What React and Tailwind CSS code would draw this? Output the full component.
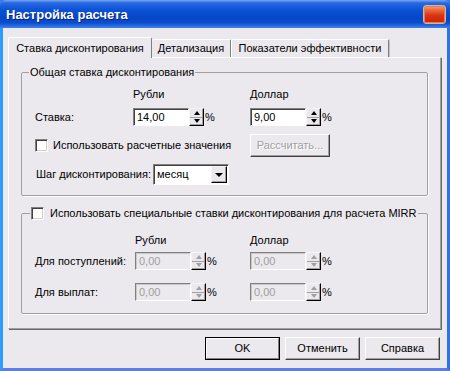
import React from 'react';

function CloseButton() {
  return (
    <div className="w-[23px] h-[19px] mr-[4px] rounded-[3px] border border-[#d9b49c] bg-[linear-gradient(180deg,#f2a474_0%,#e8683c_25%,#dc3412_55%,#cc2402_100%)] shadow-[inset_0_0_0_1px_#e87a58]" />
  );
}

function Checkbox() {
  return (
    <span className="block w-[13px] h-[13px] shrink-0 bg-white border border-t-[#808080] border-l-[#808080] border-r-white border-b-white shadow-[inset_1px_1px_0_#404040,inset_-1px_-1px_0_#d4d0c8]" />
  );
}

function Spinner({ disabled }) {
  return (
    <div className="flex flex-col w-[15px] h-[18px] border border-t-[#f4f4f4] border-l-[#f4f4f4] border-r-black border-b-black bg-[#ebe9ed] shadow-[inset_-1px_-1px_0_#a0a0a0]">
      <div className="flex-1 flex items-center justify-center border-b border-[#a0a0a0]">
        <span className={disabled ? 'w-0 h-0 border-x-[3px] border-x-transparent border-b-[4px] border-b-[#a0a0a0]' : 'w-0 h-0 border-x-[3px] border-x-transparent border-b-[4px] border-b-black'} />
      </div>
      <div className="flex-1 flex items-center justify-center">
        <span className={disabled ? 'w-0 h-0 border-x-[3px] border-x-transparent border-t-[4px] border-t-[#a0a0a0]' : 'w-0 h-0 border-x-[3px] border-x-transparent border-t-[4px] border-t-black'} />
      </div>
    </div>
  );
}

function NumField({ value, disabled }) {
  return (
    <div className="flex items-center">
      <div className={disabled
        ? 'w-[56px] h-[18px] flex items-center pl-[3px] bg-[#ebe9ed] text-[#a0a0a0] border border-t-[#808080] border-l-[#808080] border-r-white border-b-white shadow-[inset_1px_1px_0_#c8c8c8]'
        : 'w-[56px] h-[18px] flex items-center pl-[3px] bg-white border border-t-[#808080] border-l-[#808080] border-r-white border-b-white shadow-[inset_1px_1px_0_#404040]'}>
        {value}
      </div>
      <Spinner disabled={disabled} />
      <span className="ml-[1px]">%</span>
    </div>
  );
}

function Btn({ children, isDefault, disabled, w = 'w-[75px]' }) {
  if (isDefault) {
    return (
      <div className={`${w} h-[23px] border border-black`}>
        <div className="w-full h-full flex items-center justify-center border border-t-white border-l-white border-r-[#808080] border-b-[#808080]">
          {children}
        </div>
      </div>
    );
  }
  return (
    <div className={disabled
      ? `${w} h-[23px] flex items-center justify-center text-[#a0a0a0] [text-shadow:1px_1px_0_#fff] border border-t-white border-l-white border-r-[#404040] border-b-[#404040] shadow-[inset_-1px_-1px_0_#a0a0a0]`
      : `${w} h-[23px] flex items-center justify-center border border-t-white border-l-white border-r-[#404040] border-b-[#404040] shadow-[inset_-1px_-1px_0_#a0a0a0]`}>
      {children}
    </div>
  );
}

function Combo() {
  return (
    <div className="w-[76px] h-[21px] flex items-center bg-white border border-t-[#808080] border-l-[#808080] border-r-white border-b-white shadow-[inset_1px_1px_0_#404040]">
      <span className="flex-1 pl-[3px]">месяц</span>
      <div className="w-[16px] h-[17px] mr-[1px] flex items-center justify-center bg-[#ebe9ed] border border-t-[#f4f4f4] border-l-[#f4f4f4] border-r-black border-b-black shadow-[inset_-1px_-1px_0_#a0a0a0]">
        <span className="w-0 h-0 border-x-[4px] border-x-transparent border-t-[4px] border-t-black" />
      </div>
    </div>
  );
}

export default function App() {
  return (
    <div className="w-[450px] h-[371px] flex flex-col bg-[#3a7ce8] font-['Liberation_Sans',Arial,sans-serif] text-[11px] leading-[13px] text-black overflow-hidden">
      {/* title bar */}
      <div className="h-[28px] shrink-0 flex items-center justify-between pl-[6px] pt-[1px] rounded-t-[6px] bg-[linear-gradient(180deg,#7aa8f2_0%,#2a6ae2_10%,#0b52d6_35%,#0646c6_65%,#0a4ed0_82%,#3f82ea_100%)]">
        <span className="text-white font-bold text-[13px] leading-[16px] [text-shadow:1px_1px_0_#0a1f75]">Настройка расчета</span>
        <CloseButton />
      </div>

      <div className="flex-1 flex flex-col bg-[#ebe9ed] border-l-[3px] border-r-[3px] border-b-[3px] border-l-[#2e9cff] border-r-[#2f70e2] border-b-[#5b7fe6] pl-[5px] pr-[6px] pt-[9px] pb-[8px]">
        {/* tabs */}
        <div className="h-[21px] flex items-end">
          <div className="relative z-10 w-[144px] h-[21px] flex items-center justify-center bg-[#ebe9ed] border-t border-l border-r border-t-white border-l-white border-r-[#808080] rounded-t-[2px]">
            Ставка дисконтирования
          </div>
          <div className="w-[79px] h-[18px] mb-[1px] flex items-center justify-center border-t border-r border-t-white border-r-[#808080] rounded-t-[2px]">
            Детализация
          </div>
          <div className="w-[158px] h-[18px] mb-[1px] flex items-center justify-center border-t border-l border-r border-t-white border-l-white border-r-[#808080] shadow-[1px_0_0_#c0c0c0] rounded-t-[2px]">
            Показатели эффективности
          </div>
        </div>

        {/* panel */}
        <div className="flex-1 -mt-[1px] flex flex-col border border-t-white border-l-white border-r-[#a0a0a0] border-b-[#a0a0a0] shadow-[1px_1px_0_#696969] px-[12px] pt-[8px]">
          <fieldset className="border border-[#a0a0a0] shadow-[1px_1px_0_#fff] rounded-[2px] px-0 pb-[10px]">
            <legend className="ml-[7px] px-[1px] leading-[13px]">Общая ставка дисконтирования</legend>
            <div className="pl-[13px]">
              <div className="flex mt-[9px]">
                <div className="w-[98px]" />
                <div className="w-[117px]">Рубли</div>
                <div>Доллар</div>
              </div>
              <div className="flex items-center mt-[7px]">
                <div className="w-[98px]">Ставка:</div>
                <div className="w-[117px]"><NumField value="14,00" /></div>
                <NumField value="9,00" />
              </div>
              <div className="flex items-center mt-[8px]">
                <div className="w-[215px] flex items-center gap-[5px]">
                  <Checkbox />
                  <span>Использовать расчетные значения</span>
                </div>
                <Btn disabled w="w-[80px]">Рассчитать...</Btn>
              </div>
              <div className="flex items-center mt-[7px]">
                <div className="w-[118px] pl-[1px]">Шаг дисконтирования:</div>
                <Combo />
              </div>
            </div>
          </fieldset>

          <fieldset className="mt-[11px] border border-[#a0a0a0] shadow-[1px_1px_0_#fff] rounded-[2px] px-0 pb-[12px]">
            <legend className="ml-[8px] px-[1px] flex items-center gap-[6px] leading-[13px]">
              <Checkbox />
              <span>Использовать специальные ставки дисконтирования для расчета MIRR</span>
            </legend>
            <div className="pl-[13px]">
              <div className="flex mt-[14px]">
                <div className="w-[100px]" />
                <div className="w-[115px]">Рубли</div>
                <div>Доллар</div>
              </div>
              <div className="flex items-center mt-[5px]">
                <div className="w-[100px]">Для поступлений:</div>
                <div className="w-[115px]"><NumField value="0,00" disabled /></div>
                <NumField value="0,00" disabled />
              </div>
              <div className="flex items-center mt-[13px]">
                <div className="w-[100px]">Для выплат:</div>
                <div className="w-[115px]"><NumField value="0,00" disabled /></div>
                <NumField value="0,00" disabled />
              </div>
            </div>
          </fieldset>
        </div>

        {/* buttons */}
        <div className="flex justify-end gap-[5px] mt-[8px] pr-[1px]">
          <Btn isDefault>OK</Btn>
          <Btn>Отменить</Btn>
          <Btn>Справка</Btn>
        </div>
      </div>
    </div>
  );
}
